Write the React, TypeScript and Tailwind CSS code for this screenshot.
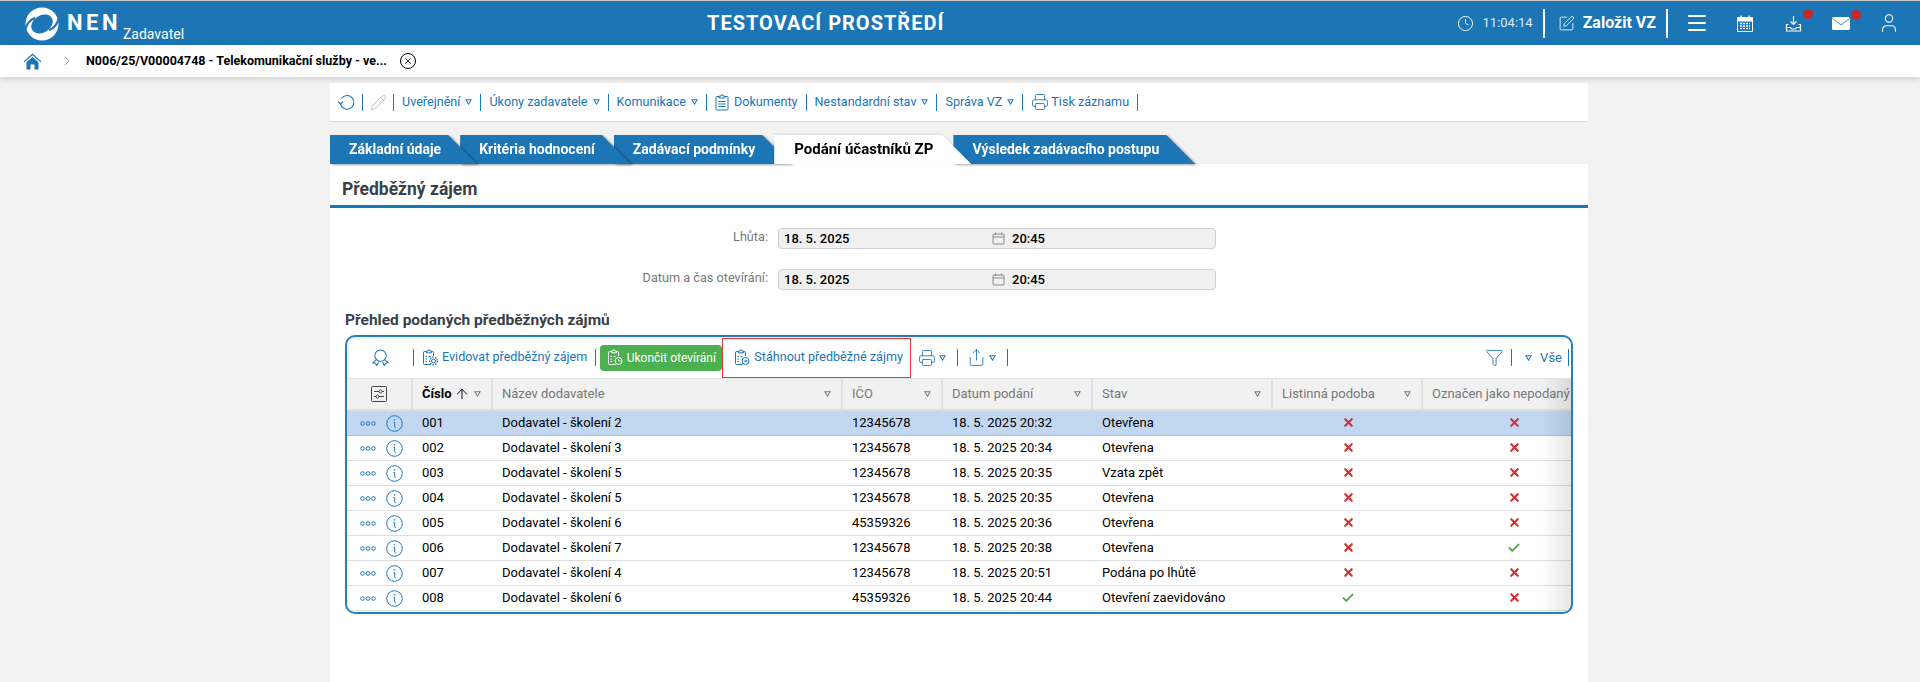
import { Clock, SquarePen, Menu, User, Pencil, Printer, Share, Funnel, X, Check, ArrowUp, ChevronRight } from "lucide-react";

const rows = [
  { id: "001", name: "Dodavatel - školení 2", ico: "12345678", date: "18. 5. 2025 20:32", state: "Otevřena", paper: false, undelivered: false },
  { id: "002", name: "Dodavatel - školení 3", ico: "12345678", date: "18. 5. 2025 20:34", state: "Otevřena", paper: false, undelivered: false },
  { id: "003", name: "Dodavatel - školení 5", ico: "12345678", date: "18. 5. 2025 20:35", state: "Vzata zpět", paper: false, undelivered: false },
  { id: "004", name: "Dodavatel - školení 5", ico: "12345678", date: "18. 5. 2025 20:35", state: "Otevřena", paper: false, undelivered: false },
  { id: "005", name: "Dodavatel - školení 6", ico: "45359326", date: "18. 5. 2025 20:36", state: "Otevřena", paper: false, undelivered: false },
  { id: "006", name: "Dodavatel - školení 7", ico: "12345678", date: "18. 5. 2025 20:38", state: "Otevřena", paper: false, undelivered: true },
  { id: "007", name: "Dodavatel - školení 4", ico: "12345678", date: "18. 5. 2025 20:51", state: "Podána po lhůtě", paper: false, undelivered: false },
  { id: "008", name: "Dodavatel - školení 6", ico: "45359326", date: "18. 5. 2025 20:44", state: "Otevření zaevidováno", paper: true, undelivered: false },
];

const cols = "grid grid-cols-[66px_80px_350px_100px_150px_180px_150px_182px]";

function Tri({ className = "" }: { className?: string }) {
  return (
    <svg viewBox="0 0 8 7" className={`w-[7px] h-[6px] shrink-0 ${className}`} fill="none" stroke="currentColor" strokeWidth="1.2">
      <path d="M1 1h6L4 6z" />
    </svg>
  );
}

function Sep({ className = "" }: { className?: string }) {
  return <div className={`w-[1px] h-[17px] bg-[#1c75b5] shrink-0 ${className}`} />;
}

function Logo() {
  return (
    <svg viewBox="0 0 34 34" className="w-[34px] h-[34px]">
      <circle cx="17" cy="17" r="16.500" fill="white" />
      <ellipse cx="17" cy="17" rx="11.500" ry="8.500" transform="rotate(-32 17 17)" fill="#1c75b5" />
      <path d="M10 11Q3 13 0 23M24 23Q31 21 34 11" fill="none" stroke="#1c75b5" strokeWidth="2.200" />
    </svg>
  );
}

function ClipboardGear({ mark, fill = "white" }: { mark: "gear" | "clock" | "arrow"; fill?: string }) {
  return (
    <svg viewBox="0 0 16 17" className="w-[16px] h-[17px] shrink-0" fill="none" stroke="currentColor" strokeWidth="1">
      <path d="M8.500 15.500H2.500a1 1 0 0 1-1-1V3.500a1 1 0 0 1 1-1h2M9.500 2.500h1a1 1 0 0 1 1 1v3.500" />
      <path d="M4.500 3.800V2h1.300a1.200 1.200 0 0 1 2.400 0h1.300v1.800z" />
      <path d="M3.500 7.500h1.500M3.500 10h1.500M3.500 12.500h1.500M6.500 7.500h2" />
      <circle cx="11.500" cy="12" r={mark === "gear" ? 2 : 3.500} fill={fill} />
      {mark === "gear" && <circle cx="11.500" cy="12" r="3.800" strokeDasharray="1.500 1.200" strokeWidth="1.300" />}
      {mark === "clock" && <path d="M11.500 10v2h2" />}
      {mark === "arrow" && <path d="M9.800 12h3.400M11.800 10.600l1.400 1.400-1.400 1.400" />}
    </svg>
  );
}

function Doc() {
  return (
    <svg viewBox="0 0 14 17" className="w-[14px] h-[17px] shrink-0" fill="none" stroke="currentColor" strokeWidth="1">
      <path d="M4 2.500H2a1 1 0 0 0-1 1v11.500a1 1 0 0 0 1 1h10a1 1 0 0 0 1-1V3.500a1 1 0 0 0-1-1h-2" />
      <path d="M4 4V2.200h1.600a1.400 1.400 0 0 1 2.800 0H10V4zM3.500 7.500h7M3.500 10h7M3.500 12.500h7" />
    </svg>
  );
}

function CalendarSmall() {
  return (
    <svg viewBox="0 0 13 13" className="w-[13px] h-[13px] shrink-0 text-[#8a8a8a]" fill="none" stroke="currentColor" strokeWidth="1">
      <rect x="1" y="2" width="11" height="10" rx="1" />
      <path d="M1 5h11M3.500.5V3M9.500.5V3" />
    </svg>
  );
}

function CalendarFull() {
  return (
    <svg viewBox="0 0 16 17" className="w-[16px] h-[17px]" fill="none" stroke="white">
      <path d="M.5 3.500h15v13H.5z" strokeWidth="1" />
      <path d="M.5 2.500h15v3.500H.5z" fill="white" strokeWidth="1" />
      <path d="M4 .5v3M12 .5v3" strokeWidth="1.400" />
      <path d="M3 8.500h10M3 11h10M3 13.500h10" strokeWidth="1.400" strokeDasharray="2 1" />
    </svg>
  );
}

function Inbox() {
  return (
    <svg viewBox="0 0 17 17" className="w-[17px] h-[17px]" fill="none" stroke="white" strokeWidth="1.200">
      <path d="M8.500 1v8M5.500 6.500l3 3 3-3" />
      <path d="M3.500 9.500H1.500v6.500h14V9.500h-2" />
      <path d="M1.500 12.500h4l1 1.500h4l1-1.500h4" />
    </svg>
  );
}

function MailIcon() {
  return (
    <svg viewBox="0 0 18 13" className="w-[18px] h-[13px]">
      <rect x="0" y="0" width="18" height="13" rx="1.500" fill="white" />
      <path d="M.5 1.500 9 8l8.500-6.500" fill="none" stroke="#1c75b5" strokeWidth="0.800" />
    </svg>
  );
}

function Home() {
  return (
    <svg viewBox="0 0 17 17" className="w-[17px] h-[17px] text-[#1c75b5]" fill="currentColor">
      <path d="M8.500 .5 0 8v1.500l8.500-7.200L17 9.500V8z" />
      <path d="M8.500 4 2.500 9.200V16.500h4V11.500h4v5h4V9.200z" />
    </svg>
  );
}

function Refresh() {
  return (
    <svg viewBox="0 0 17 17" className="w-[17px] h-[17px] shrink-0" fill="none" stroke="currentColor" strokeWidth="1.100">
      <path d="M3.500 4.500A6.800 6.800 0 1 1 2.500 10" />
      <path d="M0 7.500 2.500 10l2.500-2.500" />
    </svg>
  );
}

function Ribbon() {
  return (
    <svg viewBox="0 0 18 18" className="w-[17px] h-[17px]" fill="none" stroke="currentColor" strokeWidth="1.100">
      <circle cx="9" cy="7" r="6" />
      <path d="M4.500 11.500 1 14.500l2.500.5L5 17.500l2-4M13.500 11.500l3.500 3-2.500.5-1.500 2.500-2-4" />
    </svg>
  );
}

function Sliders() {
  return (
    <svg viewBox="0 0 16 16" className="w-[16px] h-[16px]" fill="none" stroke="currentColor" strokeWidth="1">
      <rect x=".5" y=".5" width="15" height="15" rx="1" />
      <path d="M3 5.500h5M11 5.500h2M3 10.500h2M8 10.500h5" />
      <circle cx="9.500" cy="5.500" r="1.500" />
      <circle cx="6.500" cy="10.500" r="1.500" />
    </svg>
  );
}

function InfoIcon() {
  return (
    <svg viewBox="0 0 17 17" className="w-[17px] h-[17px] text-[#1c75b5]" fill="none" stroke="currentColor" strokeWidth="1">
      <circle cx="8.500" cy="8.500" r="7.800" />
      <path d="M7.500 7.500h1.200v4.200c0 .7.300 1 1 1" />
      <path d="M8.500 4.200v1.200" strokeWidth="1.400" />
    </svg>
  );
}

function Dots() {
  return (
    <svg viewBox="0 0 16 5" className="w-[16px] h-[5px] text-[#1c75b5]" fill="none" stroke="currentColor" strokeWidth="1">
      <circle cx="2.500" cy="2.500" r="1.800" />
      <circle cx="8" cy="2.500" r="1.800" />
      <circle cx="13.500" cy="2.500" r="1.800" />
    </svg>
  );
}

function Tab({ label, active = false, className = "" }: { label: string; active?: boolean; className?: string }) {
  return (
    <div className={`relative h-[29px] ${active ? "[filter:drop-shadow(0_-1px_1px_rgba(0,0,0,0.1))]" : "[filter:drop-shadow(2px_1px_1px_rgba(0,0,0,0.35))]"} ${className}`}>
      <div
        className={`h-full flex items-center font-bold whitespace-nowrap [clip-path:polygon(0_0,calc(100%-29px)_0,100%_100%,0_100%)] ${
          active ? "bg-white text-black text-[15px] pl-[20px] pr-[38px]" : "bg-[#1c75b5] text-white text-[14px] pl-[19px] pr-[36px]"
        }`}
      >
        {label}
      </div>
    </div>
  );
}

function Mark({ ok }: { ok: boolean }) {
  return (
    <div className="flex items-center justify-center -mt-[1px]">
      {ok ? <Check className="w-[14px] h-[14px] text-[#3fa33f]" strokeWidth={3} /> : <X className="w-[13px] h-[13px] text-[#d32f2f]" strokeWidth={4} />}
    </div>
  );
}

function HeadCell({ label, tri = true }: { label: string; tri?: boolean }) {
  return (
    <div className="flex items-center justify-between pl-[9px] pr-[10px] border-r-2 border-[#e0e0e0] text-[#777] whitespace-nowrap">
      <span>{label}</span>
      {tri && <Tri />}
    </div>
  );
}

export default function App() {
  return (
    <div className="h-[682px] overflow-hidden bg-[#f2f2f2] font-['Roboto',sans-serif] text-[13px] text-black">
      <header className="h-[45px] bg-[#1c75b5] border-t border-[#c8c8c8] flex items-center text-white relative">
        <div className="ml-[25px] mt-[1px]">
          <Logo />
        </div>
        <span className="ml-[8px] text-[22px] font-bold tracking-[3.5px] leading-none">NEN</span>
        <span className="ml-[2px] mt-[21px] text-[14px] leading-none">Zadavatel</span>
        <div className="absolute left-[707px] top-[11px] text-[20px] font-bold tracking-[1px] leading-[22px] whitespace-nowrap">TESTOVACÍ PROSTŘEDÍ</div>
        <div className="ml-auto flex items-center h-full">
          <Clock className="w-[17px] h-[17px]" strokeWidth={1.3} />
          <span className="ml-[9px] text-[13px] text-[#dcecf8]">11:04:14</span>
          <div className="ml-[10px] w-[2px] h-[29px] bg-white" />
          <SquarePen className="ml-[13px] w-[17px] h-[17px]" strokeWidth={1.2} />
          <span className="ml-[8px] text-[16px] font-bold">Založit VZ</span>
          <div className="ml-[10px] w-[2px] h-[29px] bg-white" />
          <Menu className="ml-[17px] w-[24px] h-[24px]" strokeWidth={2} />
          <div className="ml-[28px]">
            <CalendarFull />
          </div>
          <div className="relative ml-[32px]">
            <Inbox />
            <div className="absolute -top-[6px] left-[18px] w-[10px] h-[10px] rounded-full bg-[#c62828]" />
          </div>
          <div className="relative ml-[30px]">
            <MailIcon />
            <div className="absolute -top-[7px] left-[19px] w-[10px] h-[10px] rounded-full bg-[#c62828]" />
          </div>
          <User className="ml-[28px] mr-[20px] w-[22px] h-[22px]" strokeWidth={1.2} />
        </div>
      </header>

      <div className="h-[32px] bg-white flex items-center shadow-[0_2px_6px_rgba(0,0,0,0.15)] relative">
        <div className="ml-[24px]">
          <Home />
        </div>
        <ChevronRight className="ml-[18px] w-[16px] h-[16px] text-[#777]" strokeWidth={1} />
        <span className="ml-[11px] text-[12.5px] font-bold whitespace-nowrap">N006/25/V00004748 - Telekomunikační služby - ve...</span>
        <div className="ml-[13px] w-[16px] h-[16px] rounded-full border border-black flex items-center justify-center">
          <X className="w-[10px] h-[10px]" strokeWidth={2} />
        </div>
      </div>

      <div className="ml-[330px] w-[1258px]">
        <div className="mt-[6px] h-[39px] bg-white border-b border-[#dcdcdc] flex items-center gap-[8px] pl-[8px] text-[#1c75b5] text-[12.6px]">
          <Refresh />
          <Sep className="-ml-[1px]" />
          <Pencil className="-ml-[1px] w-[17px] h-[17px] text-[#b5a9a0]" strokeWidth={1.1} />
          <Sep className="-ml-[2px]" />
          <span>Uveřejnění</span>
          <Tri className="-ml-[3px]" />
          <Sep />
          <span>Úkony zadavatele</span>
          <Tri className="-ml-[3px]" />
          <Sep />
          <span>Komunikace</span>
          <Tri className="-ml-[3px]" />
          <Sep />
          <Doc />
          <span className="-ml-[3px]">Dokumenty</span>
          <Sep />
          <span>Nestandardní stav</span>
          <Tri className="-ml-[3px]" />
          <Sep />
          <span>Správa VZ</span>
          <Tri className="-ml-[3px]" />
          <Sep />
          <Printer className="w-[18px] h-[18px]" strokeWidth={1.1} />
          <span className="-ml-[6px]">Tisk záznamu</span>
          <Sep />
        </div>

        <div className="mt-[13px] flex">
          <Tab label="Základní údaje" className="z-40" />
          <Tab label="Kritéria hodnocení" className="-ml-[17px] z-30" />
          <Tab label="Zadávací podmínky" className="-ml-[17px] z-20" />
          <Tab label="Podání účastníků ZP" active className="-ml-[17px] z-50" />
          <Tab label="Výsledek zadávacího postupu" className="-ml-[18px] z-10" />
        </div>

        <div className="bg-white h-[600px]">
          <div className="h-[44px] pt-[9px] border-b-[3px] border-[#1c75b5] flex items-center pl-[12px] text-[17.5px] font-bold text-[#3a4048]">Předběžný zájem</div>

          <div className="mt-[20px] flex items-center">
            <label className="w-[438px] text-right text-[#777] text-[12.7px] -mt-[3px]">Lhůta:</label>
            <div className="ml-[10px] w-[438px] h-[21px] rounded-[4px] border border-[#d0d0d0] bg-[#f0f0f0] flex items-center pl-[5px] font-medium">
              <span className="w-[208px]">18. 5. 2025</span>
              <CalendarSmall />
              <span className="ml-[7px]">20:45</span>
            </div>
          </div>
          <div className="mt-[20px] flex items-center">
            <label className="w-[438px] text-right text-[#777] text-[12.7px] -mt-[3px]">Datum a čas otevírání:</label>
            <div className="ml-[10px] w-[438px] h-[21px] rounded-[4px] border border-[#d0d0d0] bg-[#f0f0f0] flex items-center pl-[5px] font-medium">
              <span className="w-[208px]">18. 5. 2025</span>
              <CalendarSmall />
              <span className="ml-[7px]">20:45</span>
            </div>
          </div>

          <div className="mt-[20px] ml-[15px] text-[15.5px] font-bold text-[#3a4048] leading-[20px]">Přehled podaných předběžných zájmů</div>

          <div className="mt-[5px] ml-[15px] w-[1228px] h-[279px] rounded-[10px] border-2 border-[#2a7db8] overflow-hidden relative text-[#1c75b5]">
            <div className="h-[42px] flex items-center pr-[2px] border-b border-[#e4e4e4] text-[12.6px] shadow-[inset_2px_2px_3px_rgba(0,0,0,0.08)]">
              <div className="w-[66px] flex justify-center">
                <Ribbon />
              </div>
              <Sep />
              <div className="ml-[8px] flex items-center gap-[4px] whitespace-nowrap">
                <ClipboardGear mark="gear" />
                <span>Evidovat předběžný zájem</span>
              </div>
              <div className="ml-[8px]">
                <Sep />
              </div>
              <div className="ml-[4px] h-[26px] w-[122px] rounded-[4px] bg-[#4caf50] text-white flex items-center justify-center gap-[4px] whitespace-nowrap font-normal text-[12px]">
                <ClipboardGear mark="clock" fill="#4caf50" />
                <span>Ukončit otevírání</span>
              </div>
              <div className="h-[40px] w-[189px] border border-[#e53935] flex items-center pl-[11px] gap-[4px] whitespace-nowrap">
                <ClipboardGear mark="arrow" />
                <span>Stáhnout předběžné zájmy</span>
              </div>
              <Printer className="ml-[7px] w-[18px] h-[18px]" strokeWidth={1.1} />
              <Tri className="ml-[3px]" />
              <div className="ml-[11px]">
                <Sep />
              </div>
              <Share className="ml-[9px] w-[19px] h-[19px]" strokeWidth={1.1} />
              <Tri className="ml-[3px]" />
              <div className="ml-[11px]">
                <Sep />
              </div>
              <Funnel className="ml-auto w-[19px] h-[19px]" strokeWidth={1.1} />
              <div className="ml-[7px]">
                <Sep />
              </div>
              <Tri className="ml-[13px]" />
              <span className="ml-[8px] text-[13px]">Vše</span>
              <div className="ml-[6px]">
                <Sep />
              </div>
            </div>

            <div className={`${cols} h-[32px] bg-[#f1f1f1] border-b-2 border-[#e0e0e0]`}>
              <div className="flex items-center justify-center border-r-2 border-[#e0e0e0] text-[#444]">
                <Sliders />
              </div>
              <div className="flex items-center pl-[9px] pr-[10px] border-r-2 border-[#e0e0e0] font-bold text-black">
                <span>Číslo</span>
                <ArrowUp className="ml-[2px] w-[16px] h-[16px]" strokeWidth={1.4} />
                <Tri className="ml-auto text-[#777]" />
              </div>
              <HeadCell label="Název dodavatele" />
              <HeadCell label="IČO" />
              <HeadCell label="Datum podání" />
              <HeadCell label="Stav" />
              <HeadCell label="Listinná podoba" />
              <HeadCell label="Označen jako nepodaný" tri={false} />
            </div>

            {rows.map((r, i) => (
              <div key={r.id} className={`${cols} h-[25px] items-center border-b text-black ${i === 0 ? "bg-[#c2d8f2] border-[#9cc2e8]" : "border-[#dedede]"}`}>
                <div className="flex items-center pl-[13px] gap-[10px]">
                  <Dots />
                  <InfoIcon />
                </div>
                <div className="pl-[9px]">{r.id}</div>
                <div className="pl-[9px]">{r.name}</div>
                <div className="pl-[9px]">{r.ico}</div>
                <div className="pl-[9px]">{r.date}</div>
                <div className="pl-[9px]">{r.state}</div>
                <Mark ok={r.paper} />
                <Mark ok={r.undelivered} />
              </div>
            ))}
            <div className="absolute right-0 top-[42px] bottom-0 w-[30px] bg-gradient-to-l from-[#00000018] to-transparent" />
          </div>
        </div>
      </div>
    </div>
  );
}
